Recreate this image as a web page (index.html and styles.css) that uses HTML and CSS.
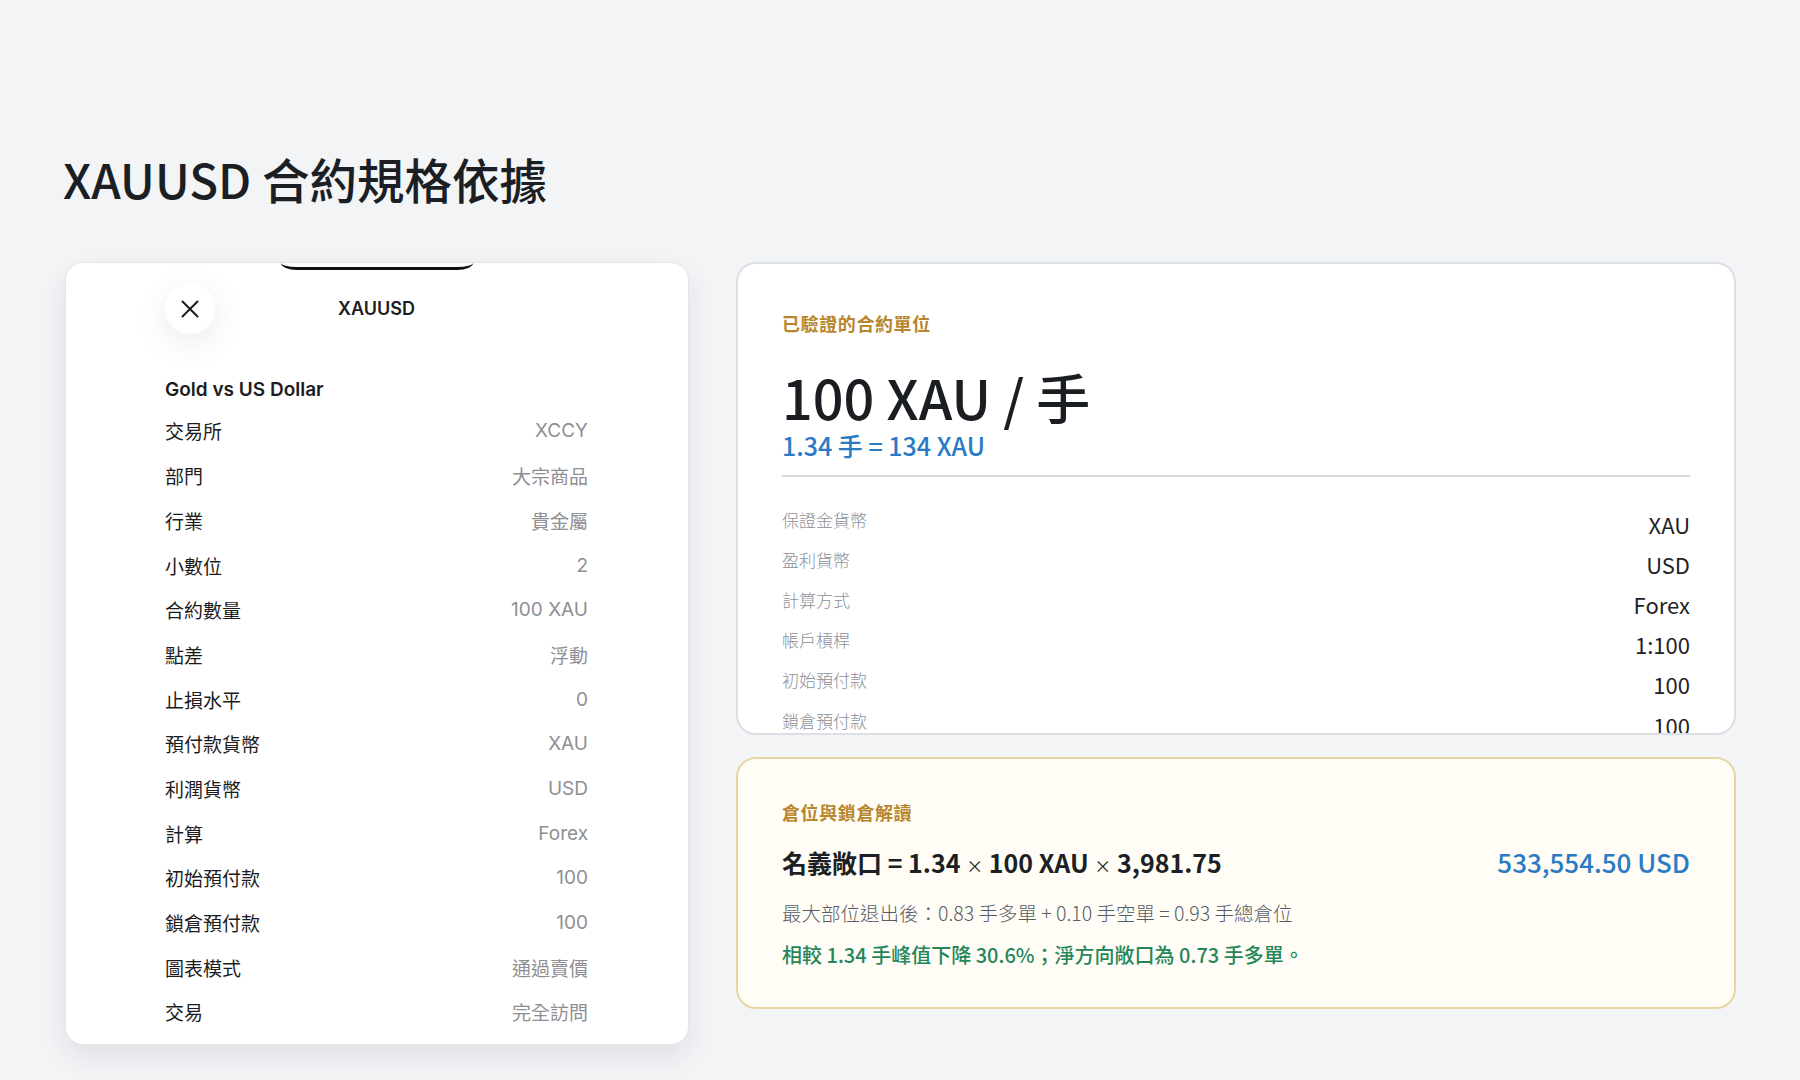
FILE: index.html
```html
<!DOCTYPE html>
<html lang="zh-Hant">

<head>
    <meta charset="utf-8">
    <title>XAUUSD 合約規格依據</title>
    <meta name="viewport" content="width=device-width, initial-scale=1.0">
    <link rel="stylesheet" href="styles.css">
</head>

<body>
    <h1 class="page-title">XAUUSD 合約規格依據</h1>

    <div class="layout">
        <!-- screenshot of the symbol spec sheet -->
        <div class="spec-shot">
            <div class="notch"></div>
            <div class="sheet-head">
                <div class="close-btn">
                    <svg width="20" height="20" viewBox="0 0 20 20">
                        <path d="M2.5 2.5 L17.5 17.5 M17.5 2.5 L2.5 17.5" stroke="#1c1c1e" stroke-width="2" stroke-linecap="round" fill="none" />
                    </svg>
                </div>
                <div class="sheet-title">XAUUSD</div>
                <div></div>
            </div>
            <div class="sheet-name">Gold vs US Dollar</div>
            <div class="sheet-row"><span>交易所</span><span class="val">XCCY</span></div>
            <div class="sheet-row"><span>部門</span><span class="val">大宗商品</span></div>
            <div class="sheet-row"><span>行業</span><span class="val">貴金屬</span></div>
            <div class="sheet-row"><span>小數位</span><span class="val">2</span></div>
            <div class="sheet-row"><span>合約數量</span><span class="val">100 XAU</span></div>
            <div class="sheet-row"><span>點差</span><span class="val">浮動</span></div>
            <div class="sheet-row"><span>止損水平</span><span class="val">0</span></div>
            <div class="sheet-row"><span>預付款貨幣</span><span class="val">XAU</span></div>
            <div class="sheet-row"><span>利潤貨幣</span><span class="val">USD</span></div>
            <div class="sheet-row"><span>計算</span><span class="val">Forex</span></div>
            <div class="sheet-row"><span>初始預付款</span><span class="val">100</span></div>
            <div class="sheet-row"><span>鎖倉預付款</span><span class="val">100</span></div>
            <div class="sheet-row"><span>圖表模式</span><span class="val">通過賣價</span></div>
            <div class="sheet-row"><span>交易</span><span class="val">完全訪問</span></div>
        </div>

        <div class="side">
            <div class="card unit-card">
                <div class="unit-head">
                    <div class="eyebrow">已驗證的合約單位</div>
                    <div class="big-unit">100 XAU / 手</div>
                    <div class="sub-unit">1.34 手 = 134 XAU</div>
                </div>
                <div class="kv"><span class="k">保證金貨幣</span><span class="v">XAU</span></div>
                <div class="kv"><span class="k">盈利貨幣</span><span class="v">USD</span></div>
                <div class="kv"><span class="k">計算方式</span><span class="v">Forex</span></div>
                <div class="kv"><span class="k">帳戶槓桿</span><span class="v">1:100</span></div>
                <div class="kv"><span class="k">初始預付款</span><span class="v">100</span></div>
                <div class="kv"><span class="k">鎖倉預付款</span><span class="v">100</span></div>
            </div>

            <div class="card note-card">
                <div class="eyebrow">倉位與鎖倉解讀</div>
                <div class="formula">
                    <span>名義敞口 = 1.34 <span class="times">×</span> 100 XAU <span class="times">×</span> 3,981.75</span>
                    <span class="total">533,554.50 USD</span>
                </div>
                <div class="note-line">最大部位退出後：0.83 手多單 + 0.10 手空單 = 0.93 手總倉位</div>
                <div class="note-good">相較 1.34 手峰值下降 30.6%；淨方向敞口為 0.73 手多單。</div>
            </div>
        </div>
    </div>
</body>

</html>
```

FILE: styles.css
```css
html,
body {
    margin: 0;
    padding: 0;
}

* {
    box-sizing: border-box;
}

body {
    background-color: #f3f4f6;
    font-family: "Noto Sans CJK TC", "Noto Sans", sans-serif;
    color: #1b1f24;
    padding: 150px 64px 0 64px;
    height: 1080px;
    overflow: hidden;
}

.page-title {
    margin: 0;
    font-size: 47.5px;
    line-height: 57.6px;
    font-weight: 500;
    letter-spacing: 0;
    margin-left: -1px;
}

.layout {
    margin-top: 54px;
    display: flex;
    gap: 47px;
    padding-left: 1px;
}

/* left: phone screenshot */
.spec-shot {
    width: 624px;
    height: 783px;
    flex: none;
    overflow: hidden;
    background: #fff;
    border: 1px solid #e1e4e9;
    border-radius: 18px;
    box-shadow: 0 12px 28px rgba(20, 30, 50, 0.09);
    padding: 0 100px 0 99px;
    font-family: Inter, "Noto Sans CJK TC", sans-serif;
    color: #1c1c1e;
}

.notch {
    width: 192px;
    height: 7px;
    margin: 0 auto;
    border-bottom: 3px solid #111;
    border-radius: 0 0 16px 16px / 0 0 7px 7px;
}

.sheet-head {
    margin-top: 14px;
    height: 50px;
    display: grid;
    grid-template-columns: 50px 1fr 50px;
    align-items: center;
}

.close-btn {
    width: 50px;
    height: 50px;
    border-radius: 50%;
    background: #fff;
    box-shadow: 0 8px 34px rgba(0, 0, 0, 0.09);
    display: flex;
    align-items: center;
    justify-content: center;
}

.sheet-title {
    text-align: center;
    font-size: 18px;
    font-weight: 600;
}

.sheet-name {
    margin-top: 37px;
    height: 38px;
    line-height: 38px;
    font-size: 19px;
    font-weight: 600;
}

.sheet-row {
    height: 44.7px;
    display: flex;
    justify-content: space-between;
    align-items: center;
    font-size: 19px;
}

.sheet-row .val {
    color: #8e8e93;
}

/* right column */
.side {
    flex: 1;
    display: flex;
    flex-direction: column;
    gap: 22px;
}

.card {
    border-radius: 20px;
    padding: 0 44px;
}

.eyebrow {
    font-size: 18px;
    line-height: 24px;
    font-weight: 600;
    letter-spacing: 0.6px;
    color: #b8862c;
}

.unit-card {
    height: 473px;
    overflow: hidden;
    background: #fff;
    border: 2px solid #dcdfe5;
    padding-top: 47px;
}

.unit-head {
    border-bottom: 2px solid #d6d9de;
    padding-bottom: 14px;
    margin-bottom: 31px;
}

.big-unit {
    margin-top: 34px;
    font-size: 54px;
    line-height: 56px;
    font-weight: 500;
    color: #1a1d21;
}

.sub-unit {
    margin-top: 5px;
    font-size: 25px;
    line-height: 31px;
    font-weight: 500;
    color: #2a7bc4;
}

.kv {
    height: 40.2px;
    display: flex;
    justify-content: space-between;
}

.kv .k {
    font-size: 17px;
    line-height: 24.6px;
    font-weight: 300;
    color: #8b9099;
}

.kv .v {
    font-size: 22px;
    line-height: 32px;
    color: #1f2328;
}

.note-card {
    background: #fffdf6;
    border: 2px solid #e8d6a2;
    padding-top: 41px;
    padding-bottom: 39px;
}

.formula {
    margin-top: 21px;
    display: flex;
    justify-content: space-between;
    align-items: baseline;
    font-size: 25px;
    line-height: 34px;
    font-weight: 600;
    color: #1c1f23;
}

.formula .times {
    font-size: 17px;
    font-weight: 400;
}

.formula .total {
    font-size: 26px;
    font-weight: 500;
    color: #2a7bc4;
}

.note-line {
    margin-top: 17px;
    font-size: 19.5px;
    line-height: 26px;
    font-weight: 300;
    color: #575c63;
}

.note-good {
    margin-top: 16px;
    font-size: 20px;
    line-height: 26px;
    font-weight: 500;
    color: #25865a;
}
```
